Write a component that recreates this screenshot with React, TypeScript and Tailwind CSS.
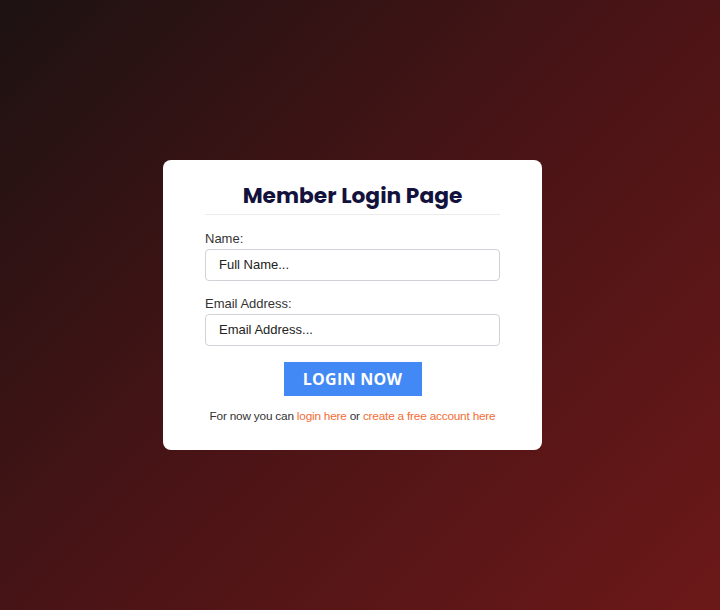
export default function App() {
  return (
    <div className="min-h-screen w-full flex items-center justify-center pr-[15px] bg-[linear-gradient(135deg,#1d1212_0%,#4a1416_50%,#6c1818_100%)] font-['Liberation_Sans',Arial,sans-serif]">
      <div className="w-[379px] bg-white rounded-lg px-[42px] pt-[20px] pb-[25px]">
        <h1 className="text-center text-[21.75px] leading-[32px] font-bold text-[#13123d] font-['Poppins','Lato','Noto_Sans',sans-serif]">
          Member Login Page
        </h1>
        <div className="h-px bg-[#ececec] mt-[2px]" />

        <form className="mt-[15px]" onSubmit={(e) => e.preventDefault()}>
          <label className="block text-[13px] leading-[17px] text-[#333]">Name:</label>
          <input
            type="text"
            placeholder="Full Name..."
            className="mt-[2px] w-full h-[32px] rounded border border-[#cfd2d6] px-[13px] text-[13px] text-[#222] placeholder:text-[#222] outline-none"
          />

          <label className="block mt-[14px] text-[13px] leading-[17px] text-[#333]">
            Email Address:
          </label>
          <input
            type="email"
            placeholder="Email Address..."
            className="mt-[2px] w-full h-[32px] rounded border border-[#cfd2d6] px-[13px] text-[13px] text-[#222] placeholder:text-[#222] outline-none"
          />

          <div className="flex justify-center mt-[16px]">
            <button
              type="submit"
              className="w-[138px] h-[34px] bg-[#4289f5] text-white text-[16px] font-bold tracking-[0.3px] font-['Open_Sans',sans-serif]"
            >
              LOGIN NOW
            </button>
          </div>
        </form>

        <p className="mt-[12px] -mx-[20px] text-center whitespace-nowrap text-[11.8px] tracking-[-0.2px] text-[#333]">
          For now you can{" "}
          <a href="#" className="text-[#f26d35]">login here</a> or{" "}
          <a href="#" className="text-[#f26d35]">create a free account here</a>
        </p>
      </div>
    </div>
  );
}
